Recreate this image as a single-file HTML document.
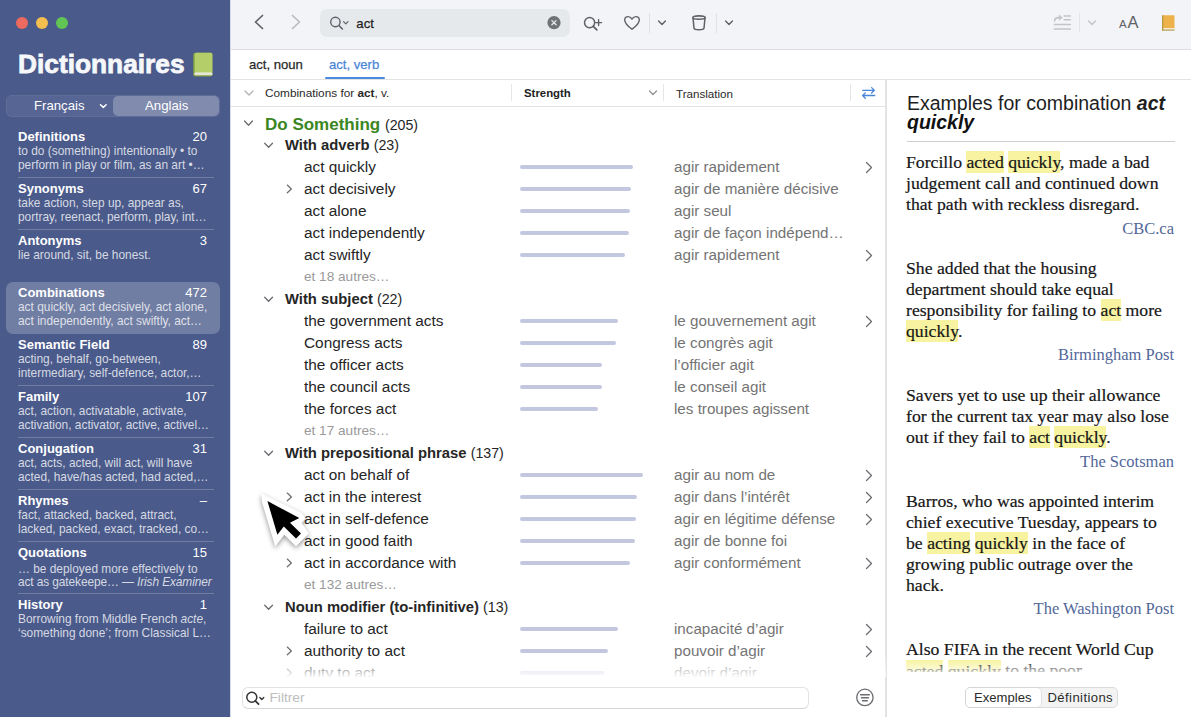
<!DOCTYPE html>
<html><head><meta charset="utf-8"><title>Dictionnaires</title>
<style>
html,body{margin:0;padding:0;}
body{width:1191px;height:717px;overflow:hidden;position:relative;background:#fff;font-family:'Liberation Sans', sans-serif;}
.t{position:absolute;white-space:nowrap;line-height:1;}
</style></head><body>
<div style="position:absolute;left:0px;top:0px;width:230px;height:717px;background:#4a5a8b"></div>
<div style="position:absolute;left:16px;top:17px;width:12px;height:12px;background:#ec6a5e;border-radius:50%"></div>
<div style="position:absolute;left:36px;top:17px;width:12px;height:12px;background:#f4bf4f;border-radius:50%"></div>
<div style="position:absolute;left:56px;top:17px;width:12px;height:12px;background:#61c554;border-radius:50%"></div>
<div class="t" style="left:18px;top:51.34px;font-size:26.3px;color:#f6f7fa;font-weight:700;font-style:normal;font-family:'Liberation Sans', sans-serif;-webkit-text-stroke:0.8px #f6f7fa">Dictionnaires</div>
<svg style="position:absolute;left:192px;top:52px" width="22" height="26" viewBox="0 0 22 26">
<rect x="1.2" y="0.8" width="19.2" height="23.6" rx="2" fill="#7f9f3e"/>
<rect x="2.6" y="0.8" width="17.8" height="20.4" rx="1.6" fill="#b4ce6a"/>
<rect x="2.4" y="20.6" width="18" height="2.6" rx="0.8" fill="#f3f1e8"/>
<rect x="2.4" y="21.7" width="18" height="0.6" fill="#c9c6b6"/>
</svg>
<div style="position:absolute;left:6px;top:95px;width:214px;height:22px;background:rgba(255,255,255,0.07);border-radius:6px;box-shadow:inset 0 0 0 0.5px rgba(255,255,255,0.12)"></div>
<div style="position:absolute;left:113px;top:96px;width:106px;height:20px;background:rgba(255,255,255,0.25);border-radius:5px"></div>
<div class="t" style="left:34px;top:98.78px;font-size:13.2px;color:#ffffff;font-weight:400;font-style:normal;font-family:'Liberation Sans', sans-serif;">Français</div>
<svg style="position:absolute;left:99px;top:102px" width="9" height="7" viewBox="0 0 9 7"><path d="M1.5 2.8 L4.3 5.4 L7.1 2.8" fill="none" stroke="#fff" stroke-width="1.5" stroke-linecap="round" stroke-linejoin="round"/></svg>
<div class="t" style="left:145px;top:98.78px;font-size:13.2px;color:#ffffff;font-weight:400;font-style:normal;font-family:'Liberation Sans', sans-serif;">Anglais</div>
<div style="position:absolute;left:6px;top:282px;width:214px;height:52px;background:rgba(255,255,255,0.22);border-radius:7px"></div>
<div class="t" style="left:18px;top:129.95px;font-size:13px;color:#ffffff;font-weight:700;font-style:normal;font-family:'Liberation Sans', sans-serif;">Definitions</div>
<div class="t r" style="right:984px;top:129.95px;font-size:13px;color:#ffffff;font-weight:400;font-style:normal;font-family:'Liberation Sans', sans-serif;">20</div>
<div class="t" style="left:18px;top:146.38px;font-size:11.9px;color:rgba(255,255,255,0.78);font-weight:400;font-style:normal;font-family:'Liberation Sans', sans-serif;">to do (something) intentionally • to</div>
<div class="t" style="left:18px;top:160.38px;font-size:11.9px;color:rgba(255,255,255,0.78);font-weight:400;font-style:normal;font-family:'Liberation Sans', sans-serif;">perform in play or film, as an art •…</div>
<div style="position:absolute;left:18px;top:177px;width:196px;height:1px;background:rgba(255,255,255,0.22)"></div>
<div class="t" style="left:18px;top:181.95px;font-size:13px;color:#ffffff;font-weight:700;font-style:normal;font-family:'Liberation Sans', sans-serif;">Synonyms</div>
<div class="t r" style="right:984px;top:181.95px;font-size:13px;color:#ffffff;font-weight:400;font-style:normal;font-family:'Liberation Sans', sans-serif;">67</div>
<div class="t" style="left:18px;top:198.38px;font-size:11.9px;color:rgba(255,255,255,0.78);font-weight:400;font-style:normal;font-family:'Liberation Sans', sans-serif;">take action, step up, appear as,</div>
<div class="t" style="left:18px;top:212.38px;font-size:11.9px;color:rgba(255,255,255,0.78);font-weight:400;font-style:normal;font-family:'Liberation Sans', sans-serif;">portray, reenact, perform, play, int…</div>
<div style="position:absolute;left:18px;top:229px;width:196px;height:1px;background:rgba(255,255,255,0.22)"></div>
<div class="t" style="left:18px;top:233.95px;font-size:13px;color:#ffffff;font-weight:700;font-style:normal;font-family:'Liberation Sans', sans-serif;">Antonyms</div>
<div class="t r" style="right:984px;top:233.95px;font-size:13px;color:#ffffff;font-weight:400;font-style:normal;font-family:'Liberation Sans', sans-serif;">3</div>
<div class="t" style="left:18px;top:250.38px;font-size:11.9px;color:rgba(255,255,255,0.78);font-weight:400;font-style:normal;font-family:'Liberation Sans', sans-serif;">lie around, sit, be honest.</div>
<div class="t" style="left:18px;top:285.95px;font-size:13px;color:#ffffff;font-weight:700;font-style:normal;font-family:'Liberation Sans', sans-serif;">Combinations</div>
<div class="t r" style="right:984px;top:285.95px;font-size:13px;color:#ffffff;font-weight:400;font-style:normal;font-family:'Liberation Sans', sans-serif;">472</div>
<div class="t" style="left:18px;top:302.38px;font-size:11.9px;color:rgba(255,255,255,0.78);font-weight:400;font-style:normal;font-family:'Liberation Sans', sans-serif;">act quickly, act decisively, act alone,</div>
<div class="t" style="left:18px;top:316.38px;font-size:11.9px;color:rgba(255,255,255,0.78);font-weight:400;font-style:normal;font-family:'Liberation Sans', sans-serif;">act independently, act swiftly, act…</div>
<div class="t" style="left:18px;top:337.95px;font-size:13px;color:#ffffff;font-weight:700;font-style:normal;font-family:'Liberation Sans', sans-serif;">Semantic Field</div>
<div class="t r" style="right:984px;top:337.95px;font-size:13px;color:#ffffff;font-weight:400;font-style:normal;font-family:'Liberation Sans', sans-serif;">89</div>
<div class="t" style="left:18px;top:354.38px;font-size:11.9px;color:rgba(255,255,255,0.78);font-weight:400;font-style:normal;font-family:'Liberation Sans', sans-serif;">acting, behalf, go-between,</div>
<div class="t" style="left:18px;top:368.38px;font-size:11.9px;color:rgba(255,255,255,0.78);font-weight:400;font-style:normal;font-family:'Liberation Sans', sans-serif;">intermediary, self-defence, actor,…</div>
<div style="position:absolute;left:18px;top:385px;width:196px;height:1px;background:rgba(255,255,255,0.22)"></div>
<div class="t" style="left:18px;top:389.95px;font-size:13px;color:#ffffff;font-weight:700;font-style:normal;font-family:'Liberation Sans', sans-serif;">Family</div>
<div class="t r" style="right:984px;top:389.95px;font-size:13px;color:#ffffff;font-weight:400;font-style:normal;font-family:'Liberation Sans', sans-serif;">107</div>
<div class="t" style="left:18px;top:406.38px;font-size:11.9px;color:rgba(255,255,255,0.78);font-weight:400;font-style:normal;font-family:'Liberation Sans', sans-serif;">act, action, activatable, activate,</div>
<div class="t" style="left:18px;top:420.38px;font-size:11.9px;color:rgba(255,255,255,0.78);font-weight:400;font-style:normal;font-family:'Liberation Sans', sans-serif;">activation, activator, active, activel…</div>
<div style="position:absolute;left:18px;top:437px;width:196px;height:1px;background:rgba(255,255,255,0.22)"></div>
<div class="t" style="left:18px;top:441.95px;font-size:13px;color:#ffffff;font-weight:700;font-style:normal;font-family:'Liberation Sans', sans-serif;">Conjugation</div>
<div class="t r" style="right:984px;top:441.95px;font-size:13px;color:#ffffff;font-weight:400;font-style:normal;font-family:'Liberation Sans', sans-serif;">31</div>
<div class="t" style="left:18px;top:458.38px;font-size:11.9px;color:rgba(255,255,255,0.78);font-weight:400;font-style:normal;font-family:'Liberation Sans', sans-serif;">act, acts, acted, will act, will have</div>
<div class="t" style="left:18px;top:472.38px;font-size:11.9px;color:rgba(255,255,255,0.78);font-weight:400;font-style:normal;font-family:'Liberation Sans', sans-serif;">acted, have/has acted, had acted,…</div>
<div style="position:absolute;left:18px;top:489px;width:196px;height:1px;background:rgba(255,255,255,0.22)"></div>
<div class="t" style="left:18px;top:493.95px;font-size:13px;color:#ffffff;font-weight:700;font-style:normal;font-family:'Liberation Sans', sans-serif;">Rhymes</div>
<div class="t r" style="right:984px;top:493.95px;font-size:13px;color:#ffffff;font-weight:400;font-style:normal;font-family:'Liberation Sans', sans-serif;">–</div>
<div class="t" style="left:18px;top:510.38px;font-size:11.9px;color:rgba(255,255,255,0.78);font-weight:400;font-style:normal;font-family:'Liberation Sans', sans-serif;">fact, attacked, backed, attract,</div>
<div class="t" style="left:18px;top:524.38px;font-size:11.9px;color:rgba(255,255,255,0.78);font-weight:400;font-style:normal;font-family:'Liberation Sans', sans-serif;">lacked, packed, exact, tracked, co…</div>
<div style="position:absolute;left:18px;top:541px;width:196px;height:1px;background:rgba(255,255,255,0.22)"></div>
<div class="t" style="left:18px;top:545.95px;font-size:13px;color:#ffffff;font-weight:700;font-style:normal;font-family:'Liberation Sans', sans-serif;">Quotations</div>
<div class="t r" style="right:984px;top:545.95px;font-size:13px;color:#ffffff;font-weight:400;font-style:normal;font-family:'Liberation Sans', sans-serif;">15</div>
<div class="t" style="left:18px;top:564.38px;font-size:11.9px;color:rgba(255,255,255,0.78);font-weight:400;font-style:normal;font-family:'Liberation Sans', sans-serif;">… be deployed more effectively to</div>
<div class="t" style="left:18px;top:577.38px;font-size:11.9px;color:rgba(255,255,255,0.78);font-weight:400;font-style:normal;font-family:'Liberation Sans', sans-serif;letter-spacing:-0.1px">act as gatekeepe… — <i>Irish Examiner</i></div>
<div style="position:absolute;left:18px;top:593px;width:196px;height:1px;background:rgba(255,255,255,0.22)"></div>
<div class="t" style="left:18px;top:597.95px;font-size:13px;color:#ffffff;font-weight:700;font-style:normal;font-family:'Liberation Sans', sans-serif;">History</div>
<div class="t r" style="right:984px;top:597.95px;font-size:13px;color:#ffffff;font-weight:400;font-style:normal;font-family:'Liberation Sans', sans-serif;">1</div>
<div class="t" style="left:18px;top:614.38px;font-size:11.9px;color:rgba(255,255,255,0.78);font-weight:400;font-style:normal;font-family:'Liberation Sans', sans-serif;">Borrowing from Middle French <i>acte</i>,</div>
<div class="t" style="left:18px;top:628.38px;font-size:11.9px;color:rgba(255,255,255,0.78);font-weight:400;font-style:normal;font-family:'Liberation Sans', sans-serif;">‘something done’; from Classical L…</div>
<div style="position:absolute;left:230px;top:0px;width:1px;height:717px;background:#d9dce6"></div>
<div style="position:absolute;left:231px;top:0px;width:960px;height:49px;background:#f2f4f7"></div>
<div style="position:absolute;left:231px;top:49px;width:960px;height:1px;background:#dcdee2"></div>
<div style="position:absolute;left:231px;top:50px;width:960px;height:29px;background:#ffffff"></div>
<div style="position:absolute;left:231px;top:79px;width:960px;height:1px;background:#e3e3e3"></div>
<div style="position:absolute;left:231px;top:80px;width:655px;height:637px;background:#ffffff"></div>
<div style="position:absolute;left:885px;top:80px;width:1.5px;height:637px;background:#e3e3e3"></div>
<div style="position:absolute;left:887px;top:80px;width:304px;height:637px;background:#ffffff"></div>
<svg style="position:absolute;left:252px;top:13px" width="14" height="18" viewBox="0 0 14 18"><path d="M10.5 2.5 L3.5 9 L10.5 15.5" fill="none" stroke="#5f6166" stroke-width="1.7" stroke-linecap="round" stroke-linejoin="round"/></svg>
<svg style="position:absolute;left:289px;top:13px" width="14" height="18" viewBox="0 0 14 18"><path d="M3.5 2.5 L10.5 9 L3.5 15.5" fill="none" stroke="#b9bbbe" stroke-width="1.7" stroke-linecap="round" stroke-linejoin="round"/></svg>
<div style="position:absolute;left:320px;top:9px;width:250px;height:28px;background:#e6e9ec;border-radius:7px"></div>
<svg style="position:absolute;left:329px;top:15px" width="22" height="16" viewBox="0 0 22 16"><circle cx="6.4" cy="7" r="4.7" fill="none" stroke="#5f6166" stroke-width="1.4"/><path d="M9.9 10.5 L13.4 14" stroke="#5f6166" stroke-width="1.6" stroke-linecap="round"/><path d="M14.6 6.6 L16.8 8.9 L19 6.6" fill="none" stroke="#5f6166" stroke-width="1.2" stroke-linecap="round" stroke-linejoin="round"/></svg>
<div class="t" style="left:356.3px;top:16.58px;font-size:13.2px;color:#1f1f1f;font-weight:400;font-style:normal;font-family:'Liberation Sans', sans-serif;-webkit-text-stroke:0.25px #1f1f1f">act</div>
<svg style="position:absolute;left:547px;top:16px" width="14" height="14" viewBox="0 0 14 14"><circle cx="7" cy="6.7" r="6.6" fill="#707276"/><path d="M4.9 4.6 L9.1 8.8 M9.1 4.6 L4.9 8.8" stroke="#e8ebee" stroke-width="1.3" stroke-linecap="round"/></svg>
<svg style="position:absolute;left:581px;top:14px" width="22" height="18" viewBox="0 0 22 18"><circle cx="8.6" cy="8.6" r="5.1" fill="none" stroke="#5f6166" stroke-width="1.5"/><path d="M12.3 12.3 L15.8 15.8" stroke="#5f6166" stroke-width="1.8" stroke-linecap="round"/><path d="M17.6 5.6 V11.6 M14.6 8.6 H20.6" stroke="#5f6166" stroke-width="1.4" stroke-linecap="round"/></svg>
<svg style="position:absolute;left:622px;top:14px" width="20" height="18" viewBox="0 0 20 18"><path d="M10 15.3 C5 11.5 2.7 9 2.7 6 C2.7 3.8 4.3 2.6 6.1 2.6 C7.8 2.6 9.1 3.7 10 5 C10.9 3.7 12.2 2.6 13.9 2.6 C15.7 2.6 17.3 3.8 17.3 6 C17.3 9 15 11.5 10 15.3 Z" fill="none" stroke="#5f6166" stroke-width="1.4" stroke-linejoin="round"/></svg>
<div style="position:absolute;left:649px;top:13px;width:1px;height:20px;background:#dfe1e4"></div>
<svg style="position:absolute;left:656px;top:19px" width="12" height="8" viewBox="0 0 12 8"><path d="M2.6 2 L6 5.5 L9.4 2" fill="none" stroke="#5f6166" stroke-width="1.4" stroke-linecap="round" stroke-linejoin="round"/></svg>
<svg style="position:absolute;left:689px;top:13px" width="20" height="20" viewBox="0 0 20 20"><ellipse cx="10" cy="4.6" rx="6.2" ry="1.7" fill="none" stroke="#5f6166" stroke-width="1.6"/><path d="M4 4.8 L5 15.2 C5.2 16.4 7.3 16.8 10 16.8 C12.7 16.8 14.8 16.4 15 15.2 L16 4.8" fill="none" stroke="#5f6166" stroke-width="1.5" stroke-linejoin="round"/></svg>
<div style="position:absolute;left:716px;top:13px;width:1px;height:20px;background:#dfe1e4"></div>
<svg style="position:absolute;left:723px;top:19px" width="12" height="8" viewBox="0 0 12 8"><path d="M2.6 2 L6 5.5 L9.4 2" fill="none" stroke="#5f6166" stroke-width="1.4" stroke-linecap="round" stroke-linejoin="round"/></svg>
<svg style="position:absolute;left:1052px;top:14px" width="21" height="17" viewBox="0 0 21 17"><path d="M2.6 7 C2.6 4.6 4.2 3.6 6.6 3.6 H8.2" fill="none" stroke="#c2c4c8" stroke-width="1.6" stroke-linecap="round"/><path d="M7.4 1.2 L10.2 3.6 L7.4 6 Z" fill="#c2c4c8" stroke="#c2c4c8" stroke-width="0.8" stroke-linejoin="round"/><path d="M12.2 2 H18.3 M12.2 5.8 H18.3 M2.4 10.5 H18.3 M2.4 15 H18.3" stroke="#c2c4c8" stroke-width="1.6" stroke-linecap="round"/></svg>
<div style="position:absolute;left:1079px;top:13px;width:1px;height:19px;background:#e3e5e8"></div>
<svg style="position:absolute;left:1086px;top:19px" width="12" height="8" viewBox="0 0 12 8"><path d="M2.5 2 L6 5.5 L9.5 2" fill="none" stroke="#c2c4c8" stroke-width="1.4" stroke-linecap="round" stroke-linejoin="round"/></svg>
<div class="t" style="left:1119px;top:18.73px;font-size:11.5px;color:#5f6166;font-weight:400;font-style:normal;font-family:'Liberation Sans', sans-serif;">A</div>
<div class="t" style="left:1127.5px;top:14.47px;font-size:16.5px;color:#5f6166;font-weight:400;font-style:normal;font-family:'Liberation Sans', sans-serif;">A</div>
<svg style="position:absolute;left:1161px;top:15px" width="15" height="17" viewBox="0 0 15 17"><rect x="1" y="0.3" width="12.5" height="14" rx="0.8" fill="#eeb24a"/><rect x="1" y="13" width="12.5" height="1.8" fill="#f4ecd4"/><rect x="1" y="14.6" width="12.5" height="1" fill="#a89040"/><rect x="1" y="0.3" width="1.3" height="15.3" fill="#b79a42"/></svg>
<div class="t" style="left:249px;top:57.87px;font-size:13.1px;color:#2a2a2a;font-weight:400;font-style:normal;font-family:'Liberation Sans', sans-serif;-webkit-text-stroke:0.25px #2a2a2a">act, noun</div>
<div class="t" style="left:329px;top:57.87px;font-size:13.1px;color:#4a86d8;font-weight:400;font-style:normal;font-family:'Liberation Sans', sans-serif;-webkit-text-stroke:0.25px #4a86d8">act, verb</div>
<div style="position:absolute;left:325px;top:77px;width:60px;height:2.2px;background:#4a8ae0;border-radius:1px"></div>
<svg style="position:absolute;left:243px;top:88px" width="12" height="10" viewBox="0 0 12 10"><path d="M2 3 L6 7 L10 3" fill="none" stroke="#b0b2b5" stroke-width="1.3" stroke-linecap="round" stroke-linejoin="round"/></svg>
<div class="t" style="left:265px;top:88.47px;font-size:11.8px;color:#2a2a2a;font-weight:400;font-style:normal;font-family:'Liberation Sans', sans-serif;">Combinations for <b>act</b>, v.</div>
<div style="position:absolute;left:511px;top:84px;width:1px;height:17px;background:#e6e6e6"></div>
<div class="t" style="left:524px;top:88.31px;font-size:11.4px;color:#222;font-weight:700;font-style:normal;font-family:'Liberation Sans', sans-serif;">Strength</div>
<svg style="position:absolute;left:647px;top:88px" width="12" height="10" viewBox="0 0 12 10"><path d="M2.5 3 L6 6.5 L9.5 3" fill="none" stroke="#8c8e91" stroke-width="1.2" stroke-linecap="round" stroke-linejoin="round"/></svg>
<div style="position:absolute;left:663px;top:84px;width:1px;height:17px;background:#e6e6e6"></div>
<div class="t" style="left:676px;top:88.14px;font-size:11.6px;color:#2a2a2a;font-weight:400;font-style:normal;font-family:'Liberation Sans', sans-serif;">Translation</div>
<div style="position:absolute;left:850px;top:84px;width:1px;height:17px;background:#e6e6e6"></div>
<svg style="position:absolute;left:860px;top:86px" width="17" height="14" viewBox="0 0 17 14"><path d="M2.7 4.3 H14.2 M11.6 1.6 L14.3 4.3 L11.6 7" fill="none" stroke="#4a86d8" stroke-width="1.3" stroke-linecap="round" stroke-linejoin="round"/><path d="M14.7 9.5 H2.8 M5.3 6.9 L2.6 9.5 L5.3 12.2" fill="none" stroke="#4a86d8" stroke-width="1.3" stroke-linecap="round" stroke-linejoin="round"/></svg>
<div style="position:absolute;left:231px;top:106px;width:654px;height:1px;background:#e3e3e3"></div>
<div style="position:absolute;left:231px;top:107px;width:655px;height:570px;overflow:hidden">
<svg style="position:absolute;left:12px;top:12px" width="11" height="8" viewBox="0 0 11 8"><path d="M1.6 2 L5.5 6.2 L9.4 2" fill="none" stroke="#6a6c70" stroke-width="1.3" stroke-linecap="round" stroke-linejoin="round"/></svg>
<div class="t" style="left:34px;top:8.55px;font-size:17px;color:#3a8622;font-weight:700;">Do Something <span style="font-weight:400;font-size:14.2px;color:#262626">(205)</span></div>
<svg style="position:absolute;left:32px;top:34px" width="11" height="8" viewBox="0 0 11 8"><path d="M1.7 2.2 L5.6 6.3 L9.5 2.2" fill="none" stroke="#6a6c70" stroke-width="1.3" stroke-linecap="round" stroke-linejoin="round"/></svg>
<div class="t" style="left:54px;top:31.42px;font-size:14.8px;color:#262626;font-weight:700;">With adverb <span style="font-weight:400;font-size:14.2px">(23)</span></div>
<div class="t" style="left:73px;top:51.91px;font-size:15.4px;color:#262626;font-weight:400;">act quickly</div>
<div style="position:absolute;left:289px;top:58px;width:113px;height:4px;border-radius:2px;background:#c3c8e0"></div>
<div class="t" style="left:443px;top:52.08px;font-size:15.2px;color:#747474;font-weight:400;">agir rapidement</div>
<svg style="position:absolute;left:633px;top:54px" width="10" height="13" viewBox="0 0 10 13"><path d="M2.5 1.5 L7.5 6.5 L2.5 11.5" fill="none" stroke="#6a6c70" stroke-width="1.3" stroke-linecap="round" stroke-linejoin="round"/></svg>
<svg style="position:absolute;left:54px;top:76px" width="9" height="12" viewBox="0 0 9 12"><path d="M2.3 2.1 L6.4 5.9 L2.3 9.7" fill="none" stroke="#707070" stroke-width="1.3" stroke-linecap="round" stroke-linejoin="round"/></svg>
<div class="t" style="left:73px;top:73.91px;font-size:15.4px;color:#262626;font-weight:400;">act decisively</div>
<div style="position:absolute;left:289px;top:80px;width:111px;height:4px;border-radius:2px;background:#c3c8e0"></div>
<div class="t" style="left:443px;top:74.08px;font-size:15.2px;color:#747474;font-weight:400;">agir de manière décisive</div>
<div class="t" style="left:73px;top:95.91px;font-size:15.4px;color:#262626;font-weight:400;">act alone</div>
<div style="position:absolute;left:289px;top:102px;width:110px;height:4px;border-radius:2px;background:#c3c8e0"></div>
<div class="t" style="left:443px;top:96.08px;font-size:15.2px;color:#747474;font-weight:400;">agir seul</div>
<div class="t" style="left:73px;top:117.91px;font-size:15.4px;color:#262626;font-weight:400;">act independently</div>
<div style="position:absolute;left:289px;top:124px;width:109px;height:4px;border-radius:2px;background:#c3c8e0"></div>
<div class="t" style="left:443px;top:118.08px;font-size:15.2px;color:#747474;font-weight:400;">agir de façon indépend…</div>
<div class="t" style="left:73px;top:139.91px;font-size:15.4px;color:#262626;font-weight:400;">act swiftly</div>
<div style="position:absolute;left:289px;top:146px;width:105px;height:4px;border-radius:2px;background:#c3c8e0"></div>
<div class="t" style="left:443px;top:140.08px;font-size:15.2px;color:#747474;font-weight:400;">agir rapidement</div>
<svg style="position:absolute;left:633px;top:142px" width="10" height="13" viewBox="0 0 10 13"><path d="M2.5 1.5 L7.5 6.5 L2.5 11.5" fill="none" stroke="#6a6c70" stroke-width="1.3" stroke-linecap="round" stroke-linejoin="round"/></svg>
<div class="t" style="left:73px;top:163.44px;font-size:13.6px;color:#9a9a9a;font-weight:400;">et 18 autres…</div>
<svg style="position:absolute;left:32px;top:188px" width="11" height="8" viewBox="0 0 11 8"><path d="M1.7 2.2 L5.6 6.3 L9.5 2.2" fill="none" stroke="#6a6c70" stroke-width="1.3" stroke-linecap="round" stroke-linejoin="round"/></svg>
<div class="t" style="left:54px;top:185.42px;font-size:14.8px;color:#262626;font-weight:700;">With subject <span style="font-weight:400;font-size:14.2px">(22)</span></div>
<div class="t" style="left:73px;top:205.91px;font-size:15.4px;color:#262626;font-weight:400;">the government acts</div>
<div style="position:absolute;left:289px;top:212px;width:98px;height:4px;border-radius:2px;background:#c3c8e0"></div>
<div class="t" style="left:443px;top:206.08px;font-size:15.2px;color:#747474;font-weight:400;">le gouvernement agit</div>
<svg style="position:absolute;left:633px;top:208px" width="10" height="13" viewBox="0 0 10 13"><path d="M2.5 1.5 L7.5 6.5 L2.5 11.5" fill="none" stroke="#6a6c70" stroke-width="1.3" stroke-linecap="round" stroke-linejoin="round"/></svg>
<div class="t" style="left:73px;top:227.91px;font-size:15.4px;color:#262626;font-weight:400;">Congress acts</div>
<div style="position:absolute;left:289px;top:234px;width:96px;height:4px;border-radius:2px;background:#c3c8e0"></div>
<div class="t" style="left:443px;top:228.08px;font-size:15.2px;color:#747474;font-weight:400;">le congrès agit</div>
<div class="t" style="left:73px;top:249.91px;font-size:15.4px;color:#262626;font-weight:400;">the officer acts</div>
<div style="position:absolute;left:289px;top:256px;width:82px;height:4px;border-radius:2px;background:#c3c8e0"></div>
<div class="t" style="left:443px;top:250.08px;font-size:15.2px;color:#747474;font-weight:400;">l’officier agit</div>
<div class="t" style="left:73px;top:271.91px;font-size:15.4px;color:#262626;font-weight:400;">the council acts</div>
<div style="position:absolute;left:289px;top:278px;width:81.5px;height:4px;border-radius:2px;background:#c3c8e0"></div>
<div class="t" style="left:443px;top:272.08px;font-size:15.2px;color:#747474;font-weight:400;">le conseil agit</div>
<div class="t" style="left:73px;top:293.91px;font-size:15.4px;color:#262626;font-weight:400;">the forces act</div>
<div style="position:absolute;left:289px;top:300px;width:77.5px;height:4px;border-radius:2px;background:#c3c8e0"></div>
<div class="t" style="left:443px;top:294.08px;font-size:15.2px;color:#747474;font-weight:400;">les troupes agissent</div>
<div class="t" style="left:73px;top:317.44px;font-size:13.6px;color:#9a9a9a;font-weight:400;">et 17 autres…</div>
<svg style="position:absolute;left:32px;top:342px" width="11" height="8" viewBox="0 0 11 8"><path d="M1.7 2.2 L5.6 6.3 L9.5 2.2" fill="none" stroke="#6a6c70" stroke-width="1.3" stroke-linecap="round" stroke-linejoin="round"/></svg>
<div class="t" style="left:54px;top:339.42px;font-size:14.8px;color:#262626;font-weight:700;">With prepositional phrase <span style="font-weight:400;font-size:14.2px">(137)</span></div>
<div class="t" style="left:73px;top:359.91px;font-size:15.4px;color:#262626;font-weight:400;">act on behalf of</div>
<div style="position:absolute;left:289px;top:366px;width:122.5px;height:4px;border-radius:2px;background:#c3c8e0"></div>
<div class="t" style="left:443px;top:360.08px;font-size:15.2px;color:#747474;font-weight:400;">agir au nom de</div>
<svg style="position:absolute;left:633px;top:362px" width="10" height="13" viewBox="0 0 10 13"><path d="M2.5 1.5 L7.5 6.5 L2.5 11.5" fill="none" stroke="#6a6c70" stroke-width="1.3" stroke-linecap="round" stroke-linejoin="round"/></svg>
<svg style="position:absolute;left:54px;top:384px" width="9" height="12" viewBox="0 0 9 12"><path d="M2.3 2.1 L6.4 5.9 L2.3 9.7" fill="none" stroke="#707070" stroke-width="1.3" stroke-linecap="round" stroke-linejoin="round"/></svg>
<div class="t" style="left:73px;top:381.91px;font-size:15.4px;color:#262626;font-weight:400;">act in the interest</div>
<div style="position:absolute;left:289px;top:388px;width:117px;height:4px;border-radius:2px;background:#c3c8e0"></div>
<div class="t" style="left:443px;top:382.08px;font-size:15.2px;color:#747474;font-weight:400;">agir dans l’intérêt</div>
<svg style="position:absolute;left:633px;top:384px" width="10" height="13" viewBox="0 0 10 13"><path d="M2.5 1.5 L7.5 6.5 L2.5 11.5" fill="none" stroke="#6a6c70" stroke-width="1.3" stroke-linecap="round" stroke-linejoin="round"/></svg>
<div class="t" style="left:73px;top:403.91px;font-size:15.4px;color:#262626;font-weight:400;">act in self-defence</div>
<div style="position:absolute;left:289px;top:410px;width:116px;height:4px;border-radius:2px;background:#c3c8e0"></div>
<div class="t" style="left:443px;top:404.08px;font-size:15.2px;color:#747474;font-weight:400;">agir en légitime défense</div>
<svg style="position:absolute;left:633px;top:406px" width="10" height="13" viewBox="0 0 10 13"><path d="M2.5 1.5 L7.5 6.5 L2.5 11.5" fill="none" stroke="#6a6c70" stroke-width="1.3" stroke-linecap="round" stroke-linejoin="round"/></svg>
<div class="t" style="left:73px;top:425.91px;font-size:15.4px;color:#262626;font-weight:400;">act in good faith</div>
<div style="position:absolute;left:289px;top:432px;width:114.5px;height:4px;border-radius:2px;background:#c3c8e0"></div>
<div class="t" style="left:443px;top:426.08px;font-size:15.2px;color:#747474;font-weight:400;">agir de bonne foi</div>
<svg style="position:absolute;left:54px;top:450px" width="9" height="12" viewBox="0 0 9 12"><path d="M2.3 2.1 L6.4 5.9 L2.3 9.7" fill="none" stroke="#707070" stroke-width="1.3" stroke-linecap="round" stroke-linejoin="round"/></svg>
<div class="t" style="left:73px;top:447.91px;font-size:15.4px;color:#262626;font-weight:400;">act in accordance with</div>
<div style="position:absolute;left:289px;top:454px;width:110px;height:4px;border-radius:2px;background:#c3c8e0"></div>
<div class="t" style="left:443px;top:448.08px;font-size:15.2px;color:#747474;font-weight:400;">agir conformément</div>
<svg style="position:absolute;left:633px;top:450px" width="10" height="13" viewBox="0 0 10 13"><path d="M2.5 1.5 L7.5 6.5 L2.5 11.5" fill="none" stroke="#6a6c70" stroke-width="1.3" stroke-linecap="round" stroke-linejoin="round"/></svg>
<div class="t" style="left:73px;top:471.44px;font-size:13.6px;color:#9a9a9a;font-weight:400;">et 132 autres…</div>
<svg style="position:absolute;left:32px;top:496px" width="11" height="8" viewBox="0 0 11 8"><path d="M1.7 2.2 L5.6 6.3 L9.5 2.2" fill="none" stroke="#6a6c70" stroke-width="1.3" stroke-linecap="round" stroke-linejoin="round"/></svg>
<div class="t" style="left:54px;top:493.42px;font-size:14.8px;color:#262626;font-weight:700;">Noun modifier (to-infinitive) <span style="font-weight:400;font-size:14.2px">(13)</span></div>
<div class="t" style="left:73px;top:513.91px;font-size:15.4px;color:#262626;font-weight:400;">failure to act</div>
<div style="position:absolute;left:289px;top:520px;width:98px;height:4px;border-radius:2px;background:#c3c8e0"></div>
<div class="t" style="left:443px;top:514.08px;font-size:15.2px;color:#747474;font-weight:400;">incapacité d’agir</div>
<svg style="position:absolute;left:633px;top:516px" width="10" height="13" viewBox="0 0 10 13"><path d="M2.5 1.5 L7.5 6.5 L2.5 11.5" fill="none" stroke="#6a6c70" stroke-width="1.3" stroke-linecap="round" stroke-linejoin="round"/></svg>
<svg style="position:absolute;left:54px;top:538px" width="9" height="12" viewBox="0 0 9 12"><path d="M2.3 2.1 L6.4 5.9 L2.3 9.7" fill="none" stroke="#707070" stroke-width="1.3" stroke-linecap="round" stroke-linejoin="round"/></svg>
<div class="t" style="left:73px;top:535.91px;font-size:15.4px;color:#262626;font-weight:400;">authority to act</div>
<div style="position:absolute;left:289px;top:542px;width:88px;height:4px;border-radius:2px;background:#c3c8e0"></div>
<div class="t" style="left:443px;top:536.08px;font-size:15.2px;color:#747474;font-weight:400;">pouvoir d’agir</div>
<svg style="position:absolute;left:633px;top:538px" width="10" height="13" viewBox="0 0 10 13"><path d="M2.5 1.5 L7.5 6.5 L2.5 11.5" fill="none" stroke="#6a6c70" stroke-width="1.3" stroke-linecap="round" stroke-linejoin="round"/></svg>
<svg style="position:absolute;left:54px;top:560px" width="9" height="12" viewBox="0 0 9 12"><path d="M2.3 2.1 L6.4 5.9 L2.3 9.7" fill="none" stroke="#707070" stroke-width="1.3" stroke-linecap="round" stroke-linejoin="round"/></svg>
<div class="t" style="left:73px;top:557.91px;font-size:15.4px;color:#262626;font-weight:400;">duty to act</div>
<div style="position:absolute;left:289px;top:564px;width:84px;height:4px;border-radius:2px;background:#c3c8e0"></div>
<div class="t" style="left:443px;top:558.08px;font-size:15.2px;color:#747474;font-weight:400;">devoir d’agir</div>
<div style="position:absolute;left:0;top:548px;width:655px;height:22px;background:linear-gradient(rgba(255,255,255,0),rgba(255,255,255,0.95))"></div>
</div>
<div style="position:absolute;left:242px;top:687px;width:567px;height:21.5px;box-sizing:border-box;border:1px solid #e2e2e2;border-bottom-color:#d6d6d6;border-radius:6px;background:#fff"></div>
<svg style="position:absolute;left:245px;top:691px" width="21" height="15" viewBox="0 0 21 15"><circle cx="6.8" cy="6.3" r="5" fill="none" stroke="#333" stroke-width="1.5"/><path d="M10.3 9.8 L13.6 13.2" stroke="#333" stroke-width="1.7" stroke-linecap="round"/><path d="M14.8 6.5 L16.8 8.5 L18.8 6.5" fill="none" stroke="#333" stroke-width="1.3" stroke-linecap="round" stroke-linejoin="round"/></svg>
<div class="t" style="left:269.5px;top:691.36px;font-size:13.7px;color:#bdbdbd;font-weight:400;font-style:normal;font-family:'Liberation Sans', sans-serif;">Filtrer</div>
<svg style="position:absolute;left:855px;top:688px" width="20" height="20" viewBox="0 0 20 20"><circle cx="9.9" cy="9.4" r="8.2" fill="none" stroke="#6a6c70" stroke-width="1.3"/><path d="M5.6 6.8 H14.3 M6.5 9.8 H13.4 M7.5 12.8 H12.3" stroke="#6a6c70" stroke-width="1.4" stroke-linecap="round"/></svg>
<div style="position:absolute;left:887px;top:80px;width:304px;height:592px;overflow:hidden">
<div style="position:absolute;white-space:nowrap;line-height:1;left:20px;top:13.83px;font-size:19.5px;color:#1e1e1e;font-family:'Liberation Sans', sans-serif;font-weight:400;font-style:normal;">Examples for combination <b><i>act</i></b></div>
<div style="position:absolute;white-space:nowrap;line-height:1;left:20px;top:32.62px;font-size:19.5px;color:#111;font-family:'Liberation Sans', sans-serif;font-weight:400;font-style:normal;"><b><i>quickly</i></b></div>
<div style="position:absolute;left:20px;top:61px;width:268px;height:1px;background:#cfcfcf"></div>
<div style="position:absolute;white-space:nowrap;line-height:1;left:19px;top:73.52px;font-size:17.7px;color:#161616;font-family:'Liberation Serif', serif;font-weight:400;font-style:normal;-webkit-text-stroke:0.2px #161616">Forcillo <span style="background:#f7f3a0;padding:0.6px 0 1.2px">acted</span> <span style="background:#f7f3a0;padding:0.6px 0 1.2px">quickly</span>, made a bad</div>
<div style="position:absolute;white-space:nowrap;line-height:1;left:19px;top:94.52px;font-size:17.7px;color:#161616;font-family:'Liberation Serif', serif;font-weight:400;font-style:normal;-webkit-text-stroke:0.2px #161616">judgement call and continued down</div>
<div style="position:absolute;white-space:nowrap;line-height:1;left:19px;top:115.52px;font-size:17.7px;color:#161616;font-family:'Liberation Serif', serif;font-weight:400;font-style:normal;-webkit-text-stroke:0.2px #161616">that path with reckless disregard.</div>
<div style="position:absolute;white-space:nowrap;line-height:1;right:17px;top:140.56px;font-size:16.5px;color:#52679a;font-family:'Liberation Serif', serif">CBC.ca</div>
<div style="position:absolute;white-space:nowrap;line-height:1;left:19px;top:179.52px;font-size:17.7px;color:#161616;font-family:'Liberation Serif', serif;font-weight:400;font-style:normal;-webkit-text-stroke:0.2px #161616">She added that the housing</div>
<div style="position:absolute;white-space:nowrap;line-height:1;left:19px;top:200.52px;font-size:17.7px;color:#161616;font-family:'Liberation Serif', serif;font-weight:400;font-style:normal;-webkit-text-stroke:0.2px #161616">department should take equal</div>
<div style="position:absolute;white-space:nowrap;line-height:1;left:19px;top:221.52px;font-size:17.7px;color:#161616;font-family:'Liberation Serif', serif;font-weight:400;font-style:normal;-webkit-text-stroke:0.2px #161616">responsibility for failing to <span style="background:#f7f3a0;padding:0.6px 0 1.2px">act</span> more</div>
<div style="position:absolute;white-space:nowrap;line-height:1;left:19px;top:242.52px;font-size:17.7px;color:#161616;font-family:'Liberation Serif', serif;font-weight:400;font-style:normal;-webkit-text-stroke:0.2px #161616"><span style="background:#f7f3a0;padding:0.6px 0 1.2px">quickly</span>.</div>
<div style="position:absolute;white-space:nowrap;line-height:1;right:17px;top:267.26px;font-size:16.5px;color:#52679a;font-family:'Liberation Serif', serif">Birmingham Post</div>
<div style="position:absolute;white-space:nowrap;line-height:1;left:19px;top:307.02px;font-size:17.7px;color:#161616;font-family:'Liberation Serif', serif;font-weight:400;font-style:normal;-webkit-text-stroke:0.2px #161616">Savers yet to use up their allowance</div>
<div style="position:absolute;white-space:nowrap;line-height:1;left:19px;top:328.02px;font-size:17.7px;color:#161616;font-family:'Liberation Serif', serif;font-weight:400;font-style:normal;-webkit-text-stroke:0.2px #161616">for the current tax year may also lose</div>
<div style="position:absolute;white-space:nowrap;line-height:1;left:19px;top:349.02px;font-size:17.7px;color:#161616;font-family:'Liberation Serif', serif;font-weight:400;font-style:normal;-webkit-text-stroke:0.2px #161616">out if they fail to <span style="background:#f7f3a0;padding:0.6px 0 1.2px">act</span> <span style="background:#f7f3a0;padding:0.6px 0 1.2px">quickly</span>.</div>
<div style="position:absolute;white-space:nowrap;line-height:1;right:17px;top:373.76px;font-size:16.5px;color:#52679a;font-family:'Liberation Serif', serif">The Scotsman</div>
<div style="position:absolute;white-space:nowrap;line-height:1;left:19px;top:413.02px;font-size:17.7px;color:#161616;font-family:'Liberation Serif', serif;font-weight:400;font-style:normal;-webkit-text-stroke:0.2px #161616">Barros, who was appointed interim</div>
<div style="position:absolute;white-space:nowrap;line-height:1;left:19px;top:434.02px;font-size:17.7px;color:#161616;font-family:'Liberation Serif', serif;font-weight:400;font-style:normal;-webkit-text-stroke:0.2px #161616">chief executive Tuesday, appears to</div>
<div style="position:absolute;white-space:nowrap;line-height:1;left:19px;top:455.02px;font-size:17.7px;color:#161616;font-family:'Liberation Serif', serif;font-weight:400;font-style:normal;-webkit-text-stroke:0.2px #161616">be <span style="background:#f7f3a0;padding:0.6px 0 1.2px">acting</span> <span style="background:#f7f3a0;padding:0.6px 0 1.2px">quickly</span> in the face of</div>
<div style="position:absolute;white-space:nowrap;line-height:1;left:19px;top:476.02px;font-size:17.7px;color:#161616;font-family:'Liberation Serif', serif;font-weight:400;font-style:normal;-webkit-text-stroke:0.2px #161616">growing public outrage over the</div>
<div style="position:absolute;white-space:nowrap;line-height:1;left:19px;top:497.02px;font-size:17.7px;color:#161616;font-family:'Liberation Serif', serif;font-weight:400;font-style:normal;-webkit-text-stroke:0.2px #161616">hack.</div>
<div style="position:absolute;white-space:nowrap;line-height:1;right:17px;top:521.26px;font-size:16.5px;color:#52679a;font-family:'Liberation Serif', serif">The Washington Post</div>
<div style="position:absolute;white-space:nowrap;line-height:1;left:19px;top:561.32px;font-size:17.7px;color:#161616;font-family:'Liberation Serif', serif;font-weight:400;font-style:normal;-webkit-text-stroke:0.2px #161616">Also FIFA in the recent World Cup</div>
<div style="position:absolute;white-space:nowrap;line-height:1;left:19px;top:582.32px;font-size:17.7px;color:#161616;font-family:'Liberation Serif', serif;font-weight:400;font-style:normal;-webkit-text-stroke:0.2px #161616"><span style="background:#f7f3a0;padding:0.6px 0 1.2px">acted</span> <span style="background:#f7f3a0;padding:0.6px 0 1.2px">quickly</span> to the poor</div>
<div style="position:absolute;left:0;top:580px;width:304px;height:12px;background:linear-gradient(rgba(255,255,255,0),rgba(255,255,255,0.75))"></div>
</div>
<div style="position:absolute;left:964.5px;top:687px;width:153px;height:21px;box-sizing:border-box;border:1px solid #dcdcdc;border-radius:5px;background:#f3f3f3"></div>
<div style="position:absolute;left:966px;top:688px;width:75px;height:19px;box-sizing:border-box;border-radius:4px;background:#fff;box-shadow:0 0 0 0.5px #d0d0d0"></div>
<div class="t" style="left:974px;top:691.37px;font-size:13.1px;color:#2a2a2a;font-weight:400;font-style:normal;font-family:'Liberation Sans', sans-serif;">Exemples</div>
<div class="t" style="left:1047.5px;top:691.37px;font-size:13.1px;color:#2a2a2a;font-weight:400;font-style:normal;font-family:'Liberation Sans', sans-serif;letter-spacing:0.4px">Définitions</div>
<svg style="position:absolute;left:245px;top:478px;filter:drop-shadow(0px 2px 2.5px rgba(0,0,0,0.4))" width="75" height="80" viewBox="245 478 75 80">
<path d="M301.9 513.3 L261.2 493.3 L262.1 502.6 L275.2 546.6 L284.3 534.8 L296.0 546.3 L308.8 533.6 L301.7 523.0 L305.6 518.2 Z" fill="#fff"/>
<path d="M267.4 501 L277.4 534.8 L283.8 526.6 L296 538.6 L301 533.6 L290 522.7 L299.3 518.1 Z" fill="#000"/>
</svg>
</body></html>
